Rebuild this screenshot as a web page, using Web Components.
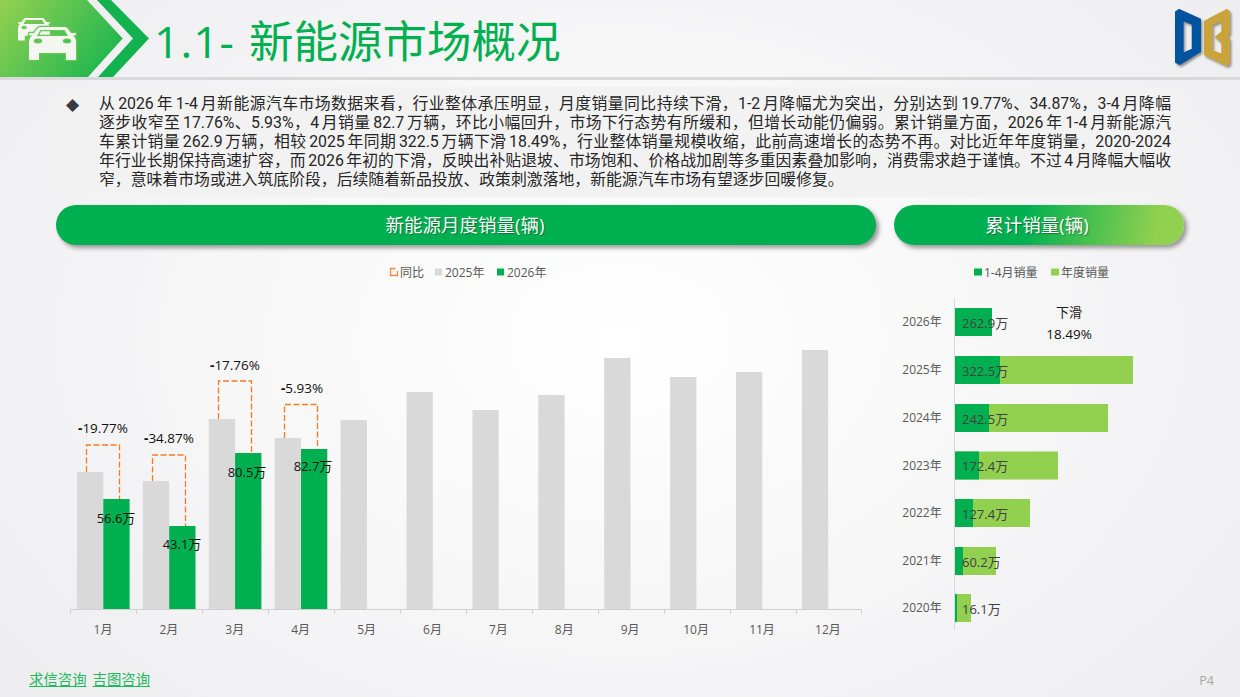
<!DOCTYPE html>
<html lang="zh"><head><meta charset="utf-8"><title>1.1 新能源市场概况</title>
<style>
html,body{margin:0;padding:0}
body{width:1240px;height:697px;overflow:hidden;font-family:"Open Sans","Noto Sans CJK SC",sans-serif;
background:radial-gradient(ellipse 760px 520px at 620px 340px,#ffffff 0%,#f8f8f9 45%,#eeeef0 100%);display:flex;flex-direction:column}
</style></head><body>
<slide-header title-num="1.1-" title-text="新能源市场概况"></slide-header>
<bullet-box></bullet-box>
<div style="display:flex;gap:18px;padding:8px 56px 0;height:40px;box-sizing:content-box">
<pill-title style="width:820px">新能源月度销量(辆)</pill-title>
<pill-title style="width:290px" fade>累计销量(辆)</pill-title>
</div>
<chart-row></chart-row>
<slide-footer></slide-footer>
<script>
function def(name,html){customElements.define(name,class extends HTMLElement{connectedCallback(){if(this.shadowRoot)return;const r=this.attachShadow({mode:'open'});r.innerHTML=typeof html==='function'?html(this):html;}})}

const carPath='M11 0H36Q38 0 39 2L42 6H46Q47 6 47 7Q47 8.500 46 8.500H44Q47 11 47 14V33H37V26H10V33H0V14Q0 11 3 8.500H1Q0 8.500 0 7Q0 6 1 6H5L8 2Q9 0 11 0ZM11.500 3L8 9H39L35.500 3ZM4.800 14a4.200 2.500 0 1 0 8.400 0a4.200 2.500 0 1 0-8.400 0ZM33.800 14a4.200 2.500 0 1 0 8.400 0a4.200 2.500 0 1 0-8.400 0Z';
const car=(x,y,s,st)=>`<path transform="translate(${x} ${y}) scale(${s})" fill="#f4f7f0" fill-rule="evenodd" ${st?'stroke="#63c655" stroke-width="2.500" paint-order="stroke"':''} d="${carPath}"/>`;

def('slide-header',h=>`<style>
:host{display:flex;align-items:center;height:77px;border-bottom:3px solid #d9d9d9;flex:none}
svg{display:block;flex:none}
h1{margin:0 0 0 5px;font:400 44.500px/1 "Open Sans","Noto Sans CJK SC",sans-serif;color:#00b050;white-space:nowrap;position:relative;top:3px}
h1 span{letter-spacing:1px;margin-right:14px}
.logo{margin-left:auto}
</style>
<svg width="149" height="77" viewBox="0 0 149 77"><defs>
<linearGradient id="g" gradientUnits="userSpaceOnUse" x1="5" y1="0" x2="110" y2="80"><stop offset="0" stop-color="#92d050"/><stop offset="1" stop-color="#16b450"/></linearGradient></defs>
<path d="M0 0H87L122.700 38.500L88 77H0Z" fill="url(#g)"/>
<path d="M97 0H111L149 38.500L113 77H98L133 38.500Z" fill="#12b24f"/>
${car(18,18,.68)}${car(29,27,1,true)}
</svg>
<h1><span>${h.getAttribute('title-num')}</span>${h.getAttribute('title-text')}</h1>
<svg class="logo" width="70" height="77" viewBox="1170 0 70 77"><defs><filter id="s" x="-20%" y="-20%" width="150%" height="150%"><feDropShadow dx="1.500" dy="2" stdDeviation="1.200" flood-color="#666" flood-opacity=".7"/></filter></defs>
<g filter="url(#s)" stroke-linejoin="round" stroke-width="2">
<path fill-rule="evenodd" fill="#05529f" stroke="#05529f" d="M1176 12L1179 10L1200 19.500V51.500L1180 64L1176 62ZM1182.700 20V54L1192.700 49.300V24Z"/>
<path fill-rule="evenodd" fill="#c9a43c" stroke="#c9a43c" d="M1205 21.500L1227 10L1229 12V33L1226.500 37L1229 39V63L1227 65L1205 54.500ZM1211.700 24V51L1222.300 55V42L1216 37L1222.300 32V20Z"/></g></svg>
`);

const para="从 2026 年 1-4 月新能源汽车市场数据来看，行业整体承压明显，月度销量同比持续下滑，1-2 月降幅尤为突出，分别达到 19.77%、34.87%，3-4 月降幅\n逐步收窄至 17.76%、5.93%，4 月销量 82.7 万辆，环比小幅回升，市场下行态势有所缓和，但增长动能仍偏弱。累计销量方面，2026 年 1-4 月新能源汽\n车累计销量 262.9 万辆，相较 2025 年同期 322.5 万辆下滑 18.49%，行业整体销量规模收缩，此前高速增长的态势不再。对比近年年度销量，2020-2024\n年行业长期保持高速扩容，而 2026 年初的下滑，反映出补贴退坡、市场饱和、价格战加剧等多重因素叠加影响，消费需求趋于谨慎。不过 4 月降幅大幅收";
const tail="窄，意味着市场或进入筑底阶段，后续随着新品投放、政策刺激落地，新能源汽车市场有望逐步回暖修复。";
def('bullet-box',`<style>
:host{display:flex;flex:none;margin:7px 56px 0;background:#f2f2f2;padding:8px 13px 5px 10px;height:97px}
.b{flex:none;width:33px;font:17px/19px "DejaVu Sans",sans-serif;color:#3a3a44}
.t{flex:1;min-width:0;font:15.850px/18.900px Roboto,"Noto Sans CJK SC",sans-serif;word-spacing:-1.500px;color:#262626}
.j{white-space:pre-line;text-align:justify;text-align-last:justify}
</style><div class="b">◆</div><div class="t"><div class="j">${para}</div><div>${tail}</div></div>`);

def('pill-title',h=>`<style>
:host{display:flex;align-items:center;justify-content:center;flex:none;height:40px;border-radius:20px;box-sizing:border-box;padding-right:${h.hasAttribute('fade')?4:2}px;
background:${h.hasAttribute('fade')?'linear-gradient(100deg,#00b050 0%,#00b050 45%,#92d050 90%)':'#00b050'};
box-shadow:3px 3px 4px rgba(90,90,90,.6);color:#fff;font:400 18.500px/1 "Open Sans","Noto Sans CJK SC",sans-serif;text-shadow:1px 1px 1px rgba(0,0,0,.35)}
</style><slot></slot>`);

const F='font-family="Open Sans,Noto Sans CJK SC,sans-serif"';
function leftChart(){
 const gray=[472,481,419,438,420,392,410,395,358,377,372,350];
 const green=[499,526,453,449];
 const glab=[['56.6万',116,518],['43.1万',182,544],['80.5万',247,472],['82.7万',313,466]];
 const dash=[[86.5,119.5,445,472,499,'-19.77%',103,428],[152.5,185.5,455,481,526,'-34.87%',169,438],[218.5,251.5,381,419,453,'-17.76%',235,365],[284.5,317.5,404.500,438,449,'-5.93%',302,388]];
 const Y0=260;let s='';
 const y=v=>v-Y0;
 gray.forEach((t,i)=>{const x=77+i*65.9;s+=`<rect x="${x}" y="${y(t)}" width="26.300" height="${609-t}" fill="#d9d9d9"/>`;
  s+=`<text x="${103+i*65.9}" y="${y(634)}" text-anchor="middle" font-size="12" fill="#595959">${i+1}月</text>`});
 green.forEach((t,i)=>{const x=103.300+i*65.9;s+=`<rect x="${x}" y="${y(t)}" width="26.300" height="${609-t}" fill="#00b050"/>`});
 dash.forEach(d=>{s+=`<path d="M${d[0]} ${y(d[3])}V${y(d[2])}H${d[1]}V${y(d[4])}" fill="none" stroke="#f47a2a" stroke-width="1.300" stroke-dasharray="6 2.500"/>`;
  s+=`<text x="${d[6]}" y="${y(d[7])+5}" text-anchor="middle" font-size="13.500" fill="#111"><tspan font-weight="700">-</tspan>${d[5].slice(1)}</text>`});
 glab.forEach(g=>{s+=`<text x="${g[1]}" y="${y(g[2])+5}" text-anchor="middle" font-size="13" fill="#111">${g[0]}</text>`});
 let ax=`M70.500 ${y(614)}V${y(609.5)}H861.500V${y(614)}`;for(let i=1;i<12;i++)ax+=`M${70.5+i*66} ${y(609.5)}V${y(614)}`;
 s+=`<path d="${ax}" fill="none" stroke="#d0d0d0"/>`;
 return `<svg width="876" height="390" viewBox="0 0 876 390" ${F}>
 <path d="M395.500 ${y(268.500)}H390.500V${y(275.500)}H397.500V${y(271)}" fill="none" stroke="#f28a45" stroke-width="1.300"/>
 <text x="400" y="${y(276.500)}" font-size="12" fill="#595959">同比</text>
 <rect x="435" y="${y(268.500)}" width="7" height="7" fill="#d9d9d9"/><text x="445" y="${y(276.500)}" font-size="12" fill="#595959">2025年</text>
 <rect x="497" y="${y(268.500)}" width="7" height="7" fill="#00b050"/><text x="507" y="${y(276.500)}" font-size="12" fill="#595959">2026年</text>
 ${s}</svg>`;
}
function rightChart(){
 const X=894,Y0=260;const x=v=>v-X,y=v=>v-Y0;
 const rows=[['2026年',992,992,'262.9万',308],['2025年',1000,1133,'322.5万',356],['2024年',989,1108,'242.5万',404],['2023年',979,1058,'172.4万',451.500],['2022年',973,1030,'127.4万',499],['2021年',963,996,'60.2万',547],['2020年',957,971,'16.1万',594]];
 let s=`<path d="M${x(954.5)} ${y(298)}V${y(630)}" stroke="#d9d9d9" fill="none"/>`;
 rows.forEach(r=>{s+=`<rect x="${x(955)}" y="${y(r[4])}" width="${r[2]-955}" height="28" fill="#92d050"/><rect x="${x(955)}" y="${y(r[4])}" width="${r[1]-955}" height="28" fill="#00b050"/>`;
  s+=`<text x="${x(922)}" y="${y(r[4])+18}" text-anchor="middle" font-size="12" fill="#595959">${r[0]}</text>`;
  s+=`<text x="${x(962)}" y="${y(r[4])+19.500}" font-size="13" fill="#404040">${r[3]}</text>`});
 return `<svg width="290" height="390" viewBox="0 0 290 390" ${F}>
 <rect x="${x(974)}" y="${y(268.500)}" width="8" height="7" fill="#00b050"/><text x="${x(984)}" y="${y(276.500)}" font-size="12" fill="#595959">1-4月销量</text>
 <rect x="${x(1051)}" y="${y(268.500)}" width="8" height="7" fill="#92d050"/><text x="${x(1061)}" y="${y(276.500)}" font-size="12" fill="#595959">年度销量</text>
 ${s}
 <text x="${x(1069)}" y="${y(317)}" text-anchor="middle" font-size="13" fill="#222">下滑</text>
 <text x="${x(1069)}" y="${y(339)}" text-anchor="middle" font-size="13.500" fill="#111">18.49%</text></svg>`;
}
def('chart-row',()=>`<style>:host{display:flex;flex:none;gap:18px;padding-top:15px;height:390px}svg{display:block;flex:none}</style>${leftChart()}${rightChart()}`);

def('slide-footer',`<style>:host{display:flex;justify-content:space-between;align-items:center;flex:1;padding:11px 26px 0 29px;margin-top:-1px;font-family:"Open Sans","Noto Sans CJK SC",sans-serif}
a{color:#1fb85c;font-size:14.400px;text-decoration:underline;margin-right:6px}.p{color:#a6a6a6;font-size:12.500px;margin-top:4px}</style>
<div><a>求信咨询</a><a>吉图咨询</a></div><div class="p">P4</div>`);
</script>
</body></html>
